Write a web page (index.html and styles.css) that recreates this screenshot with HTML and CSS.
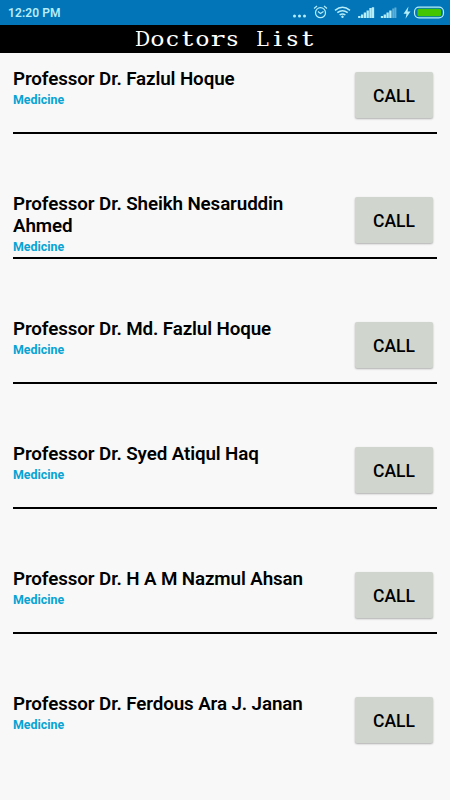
FILE: index.html
```html
<!DOCTYPE html>
<html lang="en">
<head>
<meta charset="utf-8">
<title>Doctors List</title>
<link rel="stylesheet" href="styles.css">
</head>
<body>
<header class="status">
  <span class="time">12:20 PM</span>
  <svg class="status-icons" width="160" height="25" viewBox="290 0 160 25" fill="none" stroke="#b5eef9" stroke-width="1.2">
    <g fill="#b5eef9" stroke="none"><circle cx="294.5" cy="16" r="1.5"/><circle cx="299.5" cy="16" r="1.5"/><circle cx="304.5" cy="16" r="1.5"/></g>
    <circle cx="320.5" cy="12.7" r="5"/><path d="M318 11.5l2.5 2 3-2M314 8.5l3-2.5M324 6l3 2.5"/>
    <path stroke-width="1.5" d="M335 10.3q7.5-6 15 0M337.3 12.7q5.2-4 10.4 0M339.6 15q2.9-2.2 5.8 0"/><circle cx="342.5" cy="16.7" r="1.2" fill="#b5eef9" stroke="none"/>
    <path stroke-width="2.3" d="M359.3 18v-2M362.1 18v-3.6M364.9 18v-5.4M367.7 18v-7.4M370.5 18V8M373 18V7.3"/>
    <path stroke-width="2.3" d="M382 18v-2M384.8 18v-3.6M387.6 18v-5.4M390.4 18v-7.4"/><path stroke="#5baed8" stroke-width="2" d="M393.2 18V8.4M395.4 18V7.5"/>
    <path fill="#b5eef9" stroke="none" d="M408.5 6.5l-5 7.2h3l-1 5 5-7.2h-3z"/>
    <rect x="414.5" y="7.2" width="29" height="10.6" rx="4.5"/><rect x="417.5" y="8.7" width="23.5" height="7.6" rx="1.5" fill="#43c500" stroke="none"/>
  </svg>
</header>
<h1 class="title"><span class="cap">D</span><span>o</span><span>c</span><span class="wide">t</span><span>o</span><span class="wide">r</span><span>s</span><span> </span><span class="cap">L</span><span class="wide">i</span><span>s</span><span class="wide">t</span></h1>
<main class="list">
  <article class="row"><div class="info"><h2>Professor Dr. Fazlul Hoque</h2><p>Medicine</p></div><button>CALL</button></article>
  <article class="row"><div class="info"><h2>Professor Dr. Sheikh Nesaruddin Ahmed</h2><p>Medicine</p></div><button>CALL</button></article>
  <article class="row"><div class="info"><h2>Professor Dr. Md. Fazlul Hoque</h2><p>Medicine</p></div><button>CALL</button></article>
  <article class="row"><div class="info"><h2>Professor Dr. Syed Atiqul Haq</h2><p>Medicine</p></div><button>CALL</button></article>
  <article class="row"><div class="info"><h2>Professor Dr. H A M Nazmul Ahsan</h2><p>Medicine</p></div><button>CALL</button></article>
  <article class="row"><div class="info"><h2>Professor Dr. Ferdous Ara J. Janan</h2><p>Medicine</p></div><button>CALL</button></article>
</main>
</body>
</html>
```
FILE: styles.css
```css
* { box-sizing: border-box; }
body { margin: 0; height: 800px; overflow: hidden; background: #f8f8f8; font-family: Roboto, sans-serif; color: #000; }
h1, h2, p { margin: 0; }
.status { height: 25px; background: #0274b8; display: flex; justify-content: space-between; align-items: center; padding-left: 8px; color: #b5eef9; }
.time { font-size: 12px; font-weight: 600; letter-spacing: .1px; line-height: 23px; padding-top: 2px; }
.status-icons { display: block; }
.title { height: 28px; background: #000; color: #fff; display: flex; justify-content: center; font: 400 20.5px/28px "DejaVu Serif", serif; }
.title span { width: 15px; display: flex; justify-content: center; white-space: pre; transform: scaleX(1.12); }
.title .cap { transform: scaleX(.92); }
.title .wide { transform: scaleX(1.4); }
.list { padding: 15px 13px 0; }
.row { height: 66px; margin-bottom: 59px; border-bottom: 2px solid #000; display: flex; justify-content: space-between; align-items: flex-start; }
.row:last-child { border-bottom: 0; }
.info { width: 300px; }
.info h2 { font-size: 18.8px; line-height: 22px; font-weight: 600; letter-spacing: -.11px; }
.info p { font-size: 12.4px; line-height: 15px; margin-top: 2px; font-weight: 700; color: #08a3d3; }
.row button { width: 78px; height: 46px; margin: 4px 4px 0 0; padding: 2px 0 0; border: 0; border-radius: 2px; background: #d0d5ce; box-shadow: 0 1px 2px rgba(0,0,0,.3); font: 500 17.5px Roboto, sans-serif; color: #000; }
```
